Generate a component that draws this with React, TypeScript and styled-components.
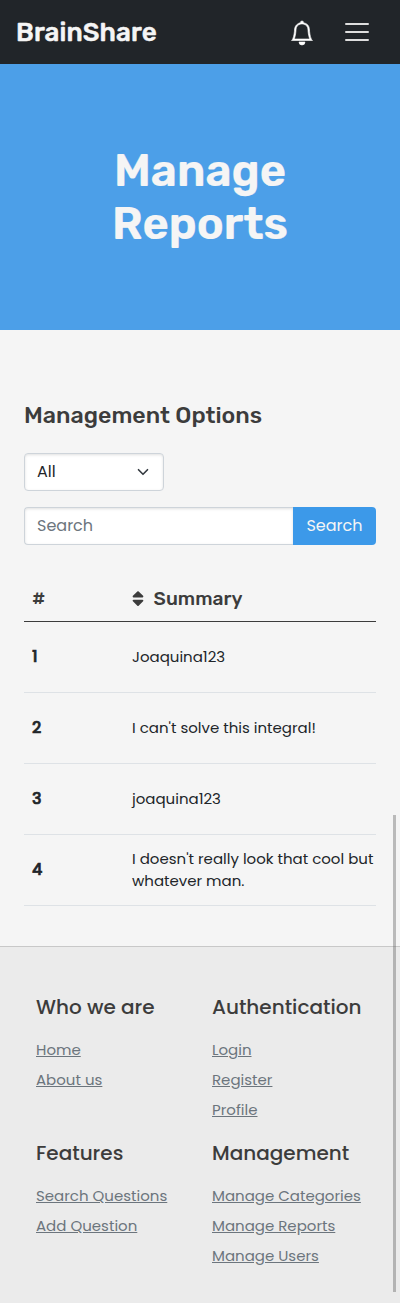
import React from 'react';
import styled, { createGlobalStyle } from 'styled-components';
import { BsBell } from 'react-icons/bs';
import { FaSort } from 'react-icons/fa';

const display = `Rubik, Roboto, "Liberation Sans", sans-serif`;
const body = `Poppins, Inter, "Liberation Sans", sans-serif`;

const GlobalStyle = createGlobalStyle`
  *, *::before, *::after { box-sizing: border-box; }
  body {
    margin: 0;
    background: #f5f5f5;
    color: #212529;
    font: 400 16px/24px ${body};
  }
  h1, h2, h3, ul { margin: 0; padding: 0; }
`;

const Page = styled.div`
  position: relative;
  width: 400px;
  height: 1303px;
  display: flex;
  flex-direction: column;
  overflow: hidden;
`;

const Navbar = styled.header`
  height: 64px;
  flex: none;
  display: flex;
  align-items: center;
  padding: 0 31px 0 16px;
  background: #212529;
`;

const Brand = styled.a`
  margin: 2px auto 0 0;
  color: #f5f5f5;
  font: 500 26px/32px ${display};
  letter-spacing: 0.08px;
  -webkit-text-stroke: 0.5px currentColor;
`;

const BellButton = styled.a`
  display: flex;
  margin: 2px 31.5px 0 0;
  color: #fff;

  svg {
    overflow: visible;
    stroke: currentColor;
    stroke-width: 0.4px;
  }
`;

const MenuIcon = styled.svg`
  display: block;
`;

const Hero = styled.section`
  height: 266px;
  flex: none;
  display: flex;
  align-items: center;
  justify-content: center;
  background: #4c9fe8;
`;

const HeroTitle = styled.h1`
  width: 240px;
  text-align: center;
  color: #f5f5f5;
  font: 600 45px/53px ${display};
  -webkit-text-stroke: 0.2px currentColor;
`;

const Main = styled.main`
  flex: none;
  height: 616px;
  padding: 70px 24px 0;
`;

const SectionTitle = styled.h2`
  color: #3c3c3c;
  font: 500 23.2px/30px ${display};
`;

const Select = styled.div`
  width: 140px;
  height: 38px;
  margin-top: 23px;
  padding: 0 12px;
  display: flex;
  align-items: center;
  justify-content: space-between;
  background: #fff;
  border: 1px solid #ced4da;
  border-radius: 4px;
  box-shadow: inset 0 1px 3px rgba(0, 0, 0, 0.12);
`;

const SearchGroup = styled.div`
  display: flex;
  height: 38px;
  margin-top: 16px;
`;

const SearchBox = styled.div`
  flex: 1;
  display: flex;
  align-items: center;
  padding-left: 12px;
  color: #6c757d;
  background: #fff;
  border: 1px solid #ced4da;
  border-right: 0;
  border-radius: 4px 0 0 4px;
  box-shadow: inset 0 1px 3px rgba(0, 0, 0, 0.12);
`;

const SearchButton = styled.button`
  width: 83px;
  padding: 0;
  border: 0;
  border-radius: 0 4px 4px 0;
  background: #3c99e9;
  color: #f5f5f5;
  font: 400 16px/24px ${body};
`;

const Table = styled.div`
  margin-top: 30px;
`;

const Row = styled.div`
  display: grid;
  grid-template-columns: 100px 1fr;
  align-items: center;
  height: 71px;
  padding-left: 8px;
  border-bottom: 1px solid #dee2e6;
`;

const HeadRow = styled(Row)`
  height: 47px;
  padding-top: 2px;
  color: #3c3c3c;
  border-bottom-color: #3c3c3c;
  font: 500 19.2px/24px ${display};
`;

const HeadCell = styled.div`
  display: flex;
  align-items: center;
  gap: 9.6px;
`;

const SortIcon = styled(FaSort)`
  width: 12px;
  height: 19.2px;
  margin-top: -1px;
`;

const Index = styled.span`
  font-weight: 500;
  -webkit-text-stroke: 0.7px currentColor;
`;

const Summary = styled.div`
  font-size: 15px;
  line-height: 22px;
`;

const Footer = styled.footer`
  flex: 1;
  display: grid;
  grid-template-columns: 176px 1fr;
  grid-template-rows: 146px auto;
  padding: 45px 0 0 36px;
  background: #ebebeb;
  border-top: 1px solid #c8c8c8;
`;

const FooterTitle = styled.h3`
  margin-bottom: 13px;
  color: #3c3c3c;
  font: 500 20px/30px ${body};
`;

const LinkList = styled.ul`
  list-style: none;
`;

const LinkItem = styled.li`
  height: 30px;
  font-size: 15px;
  line-height: 30px;
`;

const FooterLink = styled.a`
  color: #6c757d;
  text-decoration: underline;
`;

const ScrollThumb = styled.div`
  position: absolute;
  top: 815px;
  right: 4px;
  width: 3px;
  height: 477px;
  background: rgba(90, 90, 90, 0.38);
`;

const reports = [
  'Joaquina123',
  "I can't solve this integral!",
  'joaquina123',
  "I doesn't really look that cool but whatever man.",
];

const footer = [
  { title: 'Who we are', links: ['Home', 'About us'] },
  { title: 'Authentication', links: ['Login', 'Register', 'Profile'] },
  { title: 'Features', links: ['Search Questions', 'Add Question'] },
  { title: 'Management', links: ['Manage Categories', 'Manage Reports', 'Manage Users'] },
];

export default function App() {
  return (
    <Page>
      <GlobalStyle />
      <Navbar>
        <Brand>BrainShare</Brand>
        <BellButton><BsBell size={24} /></BellButton>
        <MenuIcon width="24" height="20" viewBox="0 0 24 20" stroke="#dedede" strokeWidth="2" strokeLinecap="round">
          <path d="M1 2h22M1 10h22M1 18h22" />
        </MenuIcon>
      </Navbar>
      <Hero>
        <HeroTitle>Manage Reports</HeroTitle>
      </Hero>
      <Main>
        <SectionTitle>Management Options</SectionTitle>
        <Select>
          All
          <svg width="16" height="12" viewBox="0 0 16 16" fill="none" stroke="#343a40" strokeWidth="2.2" strokeLinecap="round" strokeLinejoin="round">
            <path d="M2 5l6 6 6-6" />
          </svg>
        </Select>
        <SearchGroup>
          <SearchBox>Search</SearchBox>
          <SearchButton>Search</SearchButton>
        </SearchGroup>
        <Table>
          <HeadRow>
            <span>#</span>
            <HeadCell><SortIcon />Summary</HeadCell>
          </HeadRow>
          {reports.map((summary, i) => (
            <Row key={summary}>
              <Index>{i + 1}</Index>
              <Summary>{summary}</Summary>
            </Row>
          ))}
        </Table>
      </Main>
      <Footer>
        {footer.map(({ title, links }) => (
          <section key={title}>
            <FooterTitle>{title}</FooterTitle>
            <LinkList>
              {links.map(link => (
                <LinkItem key={link}><FooterLink>{link}</FooterLink></LinkItem>
              ))}
            </LinkList>
          </section>
        ))}
      </Footer>
      <ScrollThumb />
    </Page>
  );
}
